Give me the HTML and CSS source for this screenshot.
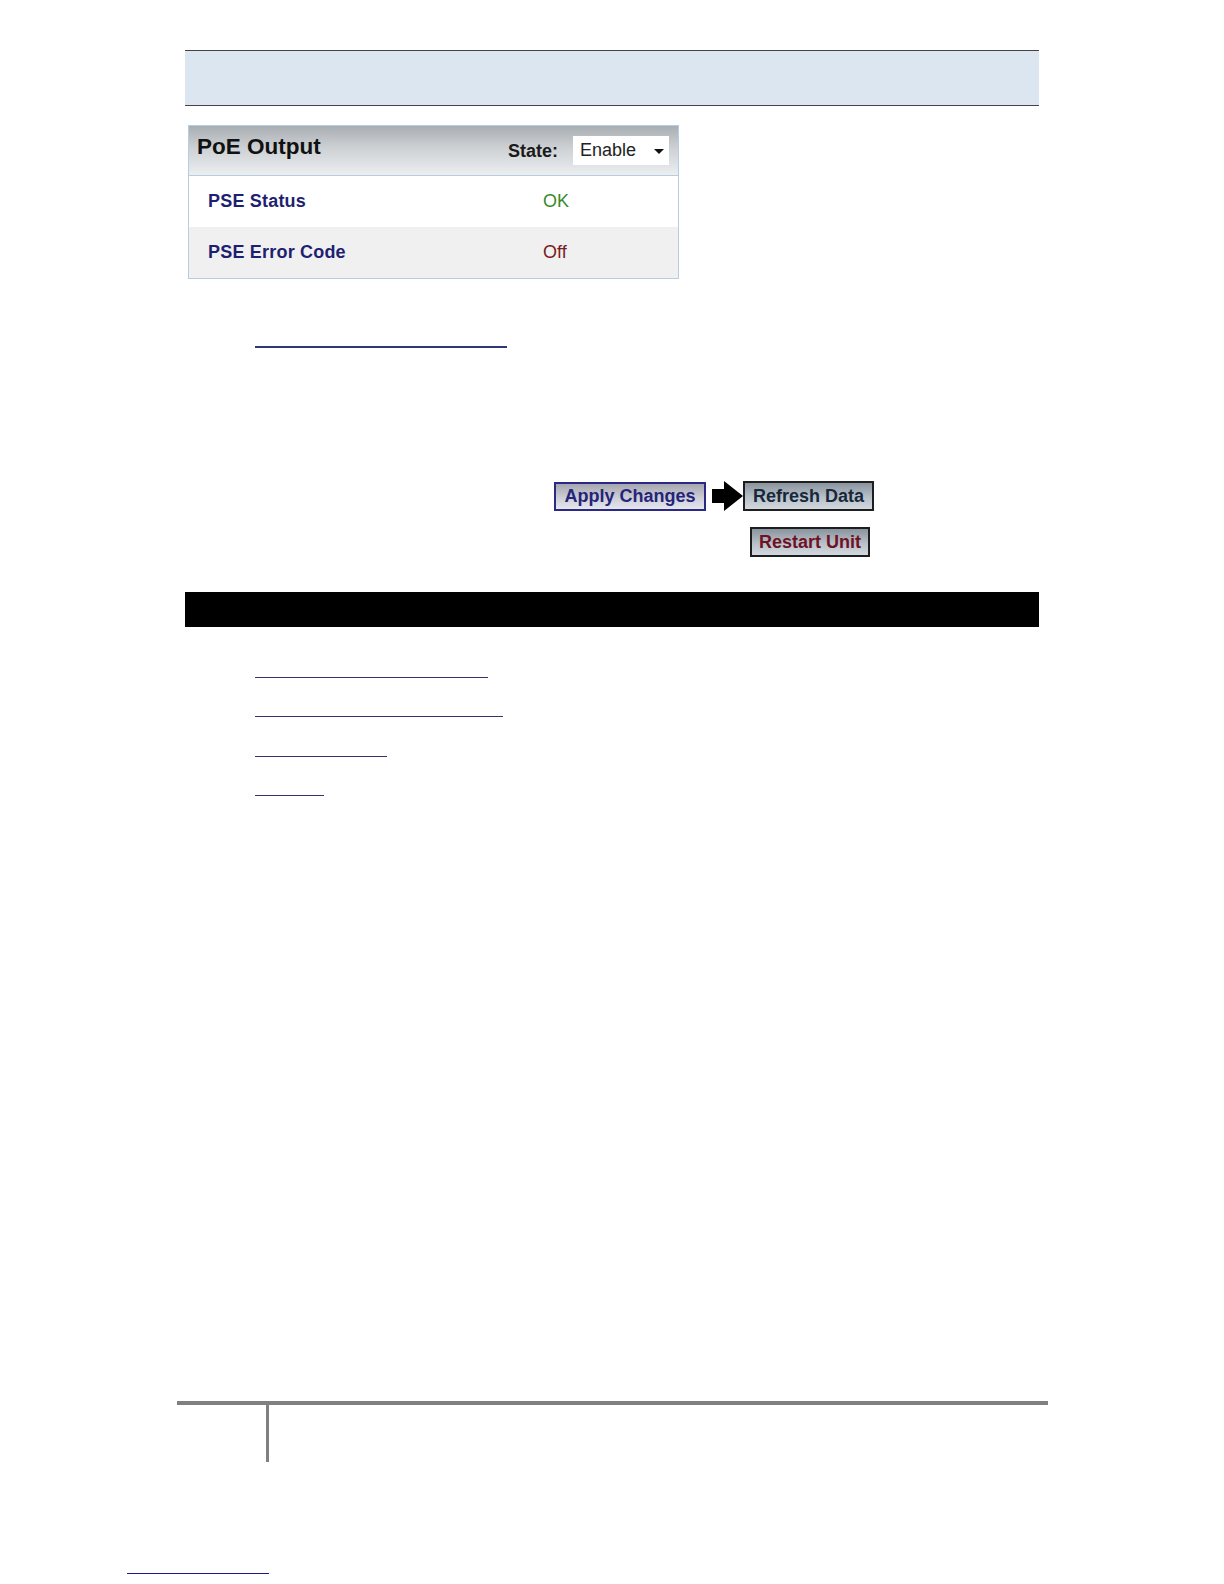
FILE: index.html
```html
<!DOCTYPE html>
<html>
<head>
<meta charset="utf-8">
<title>PoE Output</title>
<link rel="stylesheet" href="styles.css">
</head>
<body>
<div class="page">
  <div class="banner"></div>

  <div class="panel">
    <div class="panel-head">
      <span class="panel-title">PoE Output</span>
      <div class="state">
        <span class="state-label">State:</span>
        <div class="select"><span>Enable</span><span class="caret"></span></div>
      </div>
    </div>
    <div class="row row-white">
      <span class="row-label">PSE Status</span>
      <span class="row-value ok">OK</span>
    </div>
    <div class="row row-gray">
      <span class="row-label">PSE Error Code</span>
      <span class="row-value off">Off</span>
    </div>
  </div>

  <a class="blank-link" href="#"></a>

  <div class="btn-row btn-row-1">
    <span class="btn btn-apply">Apply Changes</span>
    <svg class="arrow" width="31" height="30" viewBox="0 0 31 30">
      <path d="M0 8 L12 8 L12 0 L31 15 L12 30 L12 22 L0 22 Z" fill="#000"/>
    </svg>
    <span class="btn btn-refresh">Refresh Data</span>
  </div>
  <div class="btn-row btn-row-2">
    <span class="btn btn-restart">Restart Unit</span>
  </div>

  <div class="black-bar"></div>

  <div class="links">
    <div class="link-item h39"><a class="thin-link w1" href="#"></a></div>
    <div class="link-item h39"><a class="thin-link w2" href="#"></a></div>
    <div class="link-item h40"><a class="thin-link w3" href="#"></a></div>
    <div class="link-item h39"><a class="thin-link w4" href="#"></a></div>
  </div>

  <div class="footer">
    <div class="footer-line"></div>
    <div class="footer-tick"></div>
  </div>

  <a class="bottom-link" href="#"></a>
</div>
</body>
</html>
```

FILE: styles.css
```css
html, body {
  margin: 0;
  padding: 0;
  background: #ffffff;
}

body {
  font-family: "Liberation Sans", Arial, sans-serif;
  overflow: hidden;
}

.page {
  padding-top: 50px;
}

.banner {
  margin-left: 185px;
  width: 854px;
  height: 54px;
  background: #dce6f1;
  border-top: 1px solid #444;
  border-bottom: 1px solid #444;
}

.panel {
  margin-top: 19px;
  margin-left: 188px;
  width: 489px;
  border: 1px solid #b8cce4;
}

.panel-head {
  height: 49px;
  display: flex;
  align-items: center;
  justify-content: space-between;
  padding: 0 9px 0 8px;
  background: linear-gradient(to bottom, #a9aeb3 0%, #cdd1d4 45%, #eceef0 100%);
  border-bottom: 1px solid #b8cce4;
}

.panel-title {
  font-size: 22.5px;
  font-weight: bold;
  color: #111;
  margin-top: -8px;
}

.state {
  display: flex;
  align-items: center;
  gap: 15px;
}

.state-label {
  font-size: 18px;
  font-weight: bold;
  color: #1a1a1a;
  margin-top: 1px;
}

.select {
  width: 96px;
  height: 29px;
  background: #fff;
  display: flex;
  align-items: center;
  justify-content: space-between;
  padding: 0 5px 0 7px;
  box-sizing: border-box;
  font-size: 18px;
  color: #222;
}

.caret {
  width: 0;
  height: 0;
  border-left: 5px solid transparent;
  border-right: 5px solid transparent;
  border-top: 5px solid #111;
  margin-top: 2px;
}

.row {
  display: flex;
  align-items: center;
  padding-left: 19px;
  font-size: 18px;
}

.row-white {
  height: 51px;
  background: #fff;
}

.row-gray {
  height: 51px;
  background: #f0f0f0;
}

.row-label {
  width: 335px;
  font-weight: bold;
  color: #1f1f72;
  letter-spacing: 0.2px;
}

.row-value.ok {
  color: #3a8a2a;
}

.row-value.off {
  color: #7a1a1a;
}

.blank-link {
  display: block;
  margin-top: 67px;
  margin-left: 255px;
  width: 252px;
  height: 0;
  border-top: 2px solid #2e3778;
}

.btn-row {
  display: flex;
  align-items: center;
}

.btn-row-1 {
  margin-top: 133px;
  margin-left: 554px;
  height: 30px;
}

.btn-row-2 {
  margin-top: 16px;
  margin-left: 750px;
  height: 30px;
}

.btn {
  box-sizing: border-box;
  display: inline-flex;
  align-items: center;
  justify-content: center;
  font-size: 18px;
  font-weight: bold;
}

.btn-apply {
  width: 152px;
  height: 29px;
  border: 2px solid #2a2a86;
  color: #24247a;
  background: linear-gradient(to bottom, #a6a6b0 0%, #cdcdd6 55%, #e6e6ee 100%);
}

.arrow {
  margin-left: 6px;
  display: block;
}

.btn-refresh {
  width: 131px;
  height: 30px;
  border: 2px solid #1e1e1e;
  color: #18283a;
  background: linear-gradient(to bottom, #8a949e 0%, #b8c0c8 55%, #d2d8de 100%);
}

.btn-restart {
  width: 120px;
  height: 30px;
  border: 2px solid #1e1e1e;
  color: #6e1226;
  background: linear-gradient(to bottom, #8a949e 0%, #b8c0c8 55%, #d2d8de 100%);
}

.black-bar {
  margin-top: 35px;
  margin-left: 185px;
  width: 854px;
  height: 35px;
  background: #000;
}

.links {
  margin-top: 12px;
}

.link-item {
  display: flex;
  align-items: flex-end;
}

.h39 { height: 39px; }
.h40 { height: 40px; }

.thin-link {
  display: block;
  margin-left: 255px;
  height: 0;
  border-bottom: 1px solid #3b2f70;
}

.w1 { width: 233px; }
.w2 { width: 248px; }
.w3 { width: 132px; }
.w4 { width: 69px; }

.footer {
  margin-top: 605px;
}

.footer-line {
  margin-left: 177px;
  width: 871px;
  height: 4px;
  background: #808080;
}

.footer-tick {
  margin-left: 266px;
  width: 3px;
  height: 57px;
  background: #808080;
}

.bottom-link {
  display: block;
  margin-top: 111px;
  margin-left: 127px;
  width: 142px;
  height: 0;
  border-top: 1px solid #1a1a8a;
}
```
